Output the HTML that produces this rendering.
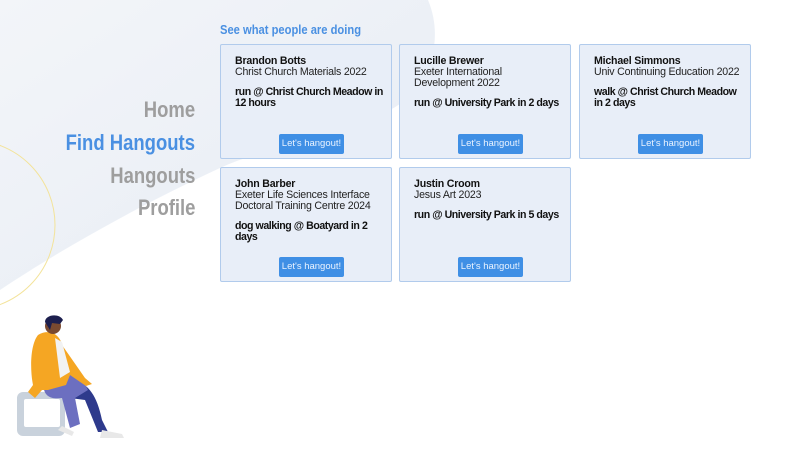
<!DOCTYPE html>
<html><head><style>
*{margin:0;padding:0;box-sizing:border-box}
body{width:806px;height:453px;overflow:hidden;background:#fff;font-family:"Liberation Sans",Arial,sans-serif;position:relative}
svg.bg{position:absolute;left:0;top:0}
.nav{position:absolute;right:611px;text-align:right;font-weight:bold;font-size:22px;color:#9e9e9e;white-space:nowrap;transform:scaleX(0.84);transform-origin:right center}
h2{position:absolute;left:220px;top:22px;font-size:13px;color:#4a90e2;font-weight:bold;white-space:nowrap;transform:scaleX(0.86);transform-origin:left center}
.card{position:absolute;width:172px;height:115px;background:#e8eef8;border:1px solid #b1cbec;border-radius:2px;padding:11px 14px;font-size:10.6px;line-height:11px;color:#222;letter-spacing:-0.2px;white-space:nowrap}
.card b{color:#111}
.card p{margin-top:9px;font-weight:bold;color:#111;letter-spacing:-0.45px}
.btn{position:absolute;left:58px;top:89px;width:65px;height:20px;background:#3f8fe5;color:#eaf3ff;font-size:9.5px;line-height:20px;text-align:center;border-radius:2px;letter-spacing:0}
</style></head><body>
<svg class="bg" width="806" height="453">
<defs><linearGradient id="g" x1="0" y1="0" x2="1" y2="1"><stop offset="0" stop-color="#f3f5f9"/><stop offset="1" stop-color="#e6ecf4"/></linearGradient></defs>
<path d="M0 0 H428 C445 40 430 90 390 110 C330 140 270 145 220 168 C140 205 60 250 0 290 Z" fill="url(#g)"/>
<circle cx="-30" cy="225" r="85" fill="none" stroke="#f3e39a" stroke-width="1"/>
<rect x="17" y="392" width="48" height="44" rx="6" fill="#c9d2dc"/>
<rect x="24" y="399" width="36" height="28" rx="2" fill="#fff"/>
<path d="M60 380 C80 378 95 385 102 420 L108 432 L98 432 L85 400 L70 398 Z" fill="#2e3a8c"/>
<path d="M45 378 C55 370 80 372 88 390 L75 398 L80 424 L70 428 L62 398 C50 400 40 395 45 378 Z" fill="#6c6fc0"/>
<path d="M38 335 C50 328 60 335 62 345 L85 378 L92 384 L86 386 L70 375 L66 385 L48 390 L42 390 L35 398 L28 392 L33 385 C30 370 30 345 38 335 Z" fill="#f5a623"/>
<path d="M55 338 L62 342 L70 372 L60 378 Z" fill="#f2f2f2"/>
<circle cx="53" cy="326" r="8" fill="#7a4a30"/>
<path d="M45 322 C45 314 60 313 63 320 L60 324 L52 323 L50 330 Z" fill="#1d1f4e"/>
<path d="M62 426 L74 432 L72 436 L58 430 Z" fill="#e8e8e8"/>
<path d="M102 430 L122 434 L124 438 L100 438 Z" fill="#e8e8e8"/>
</svg>
<div class="nav" style="top:97px">Home</div>
<div class="nav" style="top:130px;color:#4a90e2">Find Hangouts</div>
<div class="nav" style="top:163px">Hangouts</div>
<div class="nav" style="top:195px">Profile</div>
<h2>See what people are doing</h2>
<div class="card" style="left:220px;top:44px"><b>Brandon Botts</b><br>Christ Church Materials 2022<p>run @ Christ Church Meadow in<br>12 hours</p><div class="btn">Let's hangout!</div></div>
<div class="card" style="left:399px;top:44px"><b>Lucille Brewer</b><br>Exeter International<br>Development 2022<p>run @ University Park in 2 days</p><div class="btn">Let's hangout!</div></div>
<div class="card" style="left:579px;top:44px"><b>Michael Simmons</b><br>Univ Continuing Education 2022<p>walk @ Christ Church Meadow<br>in 2 days</p><div class="btn">Let's hangout!</div></div>
<div class="card" style="left:220px;top:167px"><b>John Barber</b><br>Exeter Life Sciences Interface<br>Doctoral Training Centre 2024<p>dog walking @ Boatyard in 2<br>days</p><div class="btn">Let's hangout!</div></div>
<div class="card" style="left:399px;top:167px"><b>Justin Croom</b><br>Jesus Art 2023<p>run @ University Park in 5 days</p><div class="btn">Let's hangout!</div></div>
</body></html>
